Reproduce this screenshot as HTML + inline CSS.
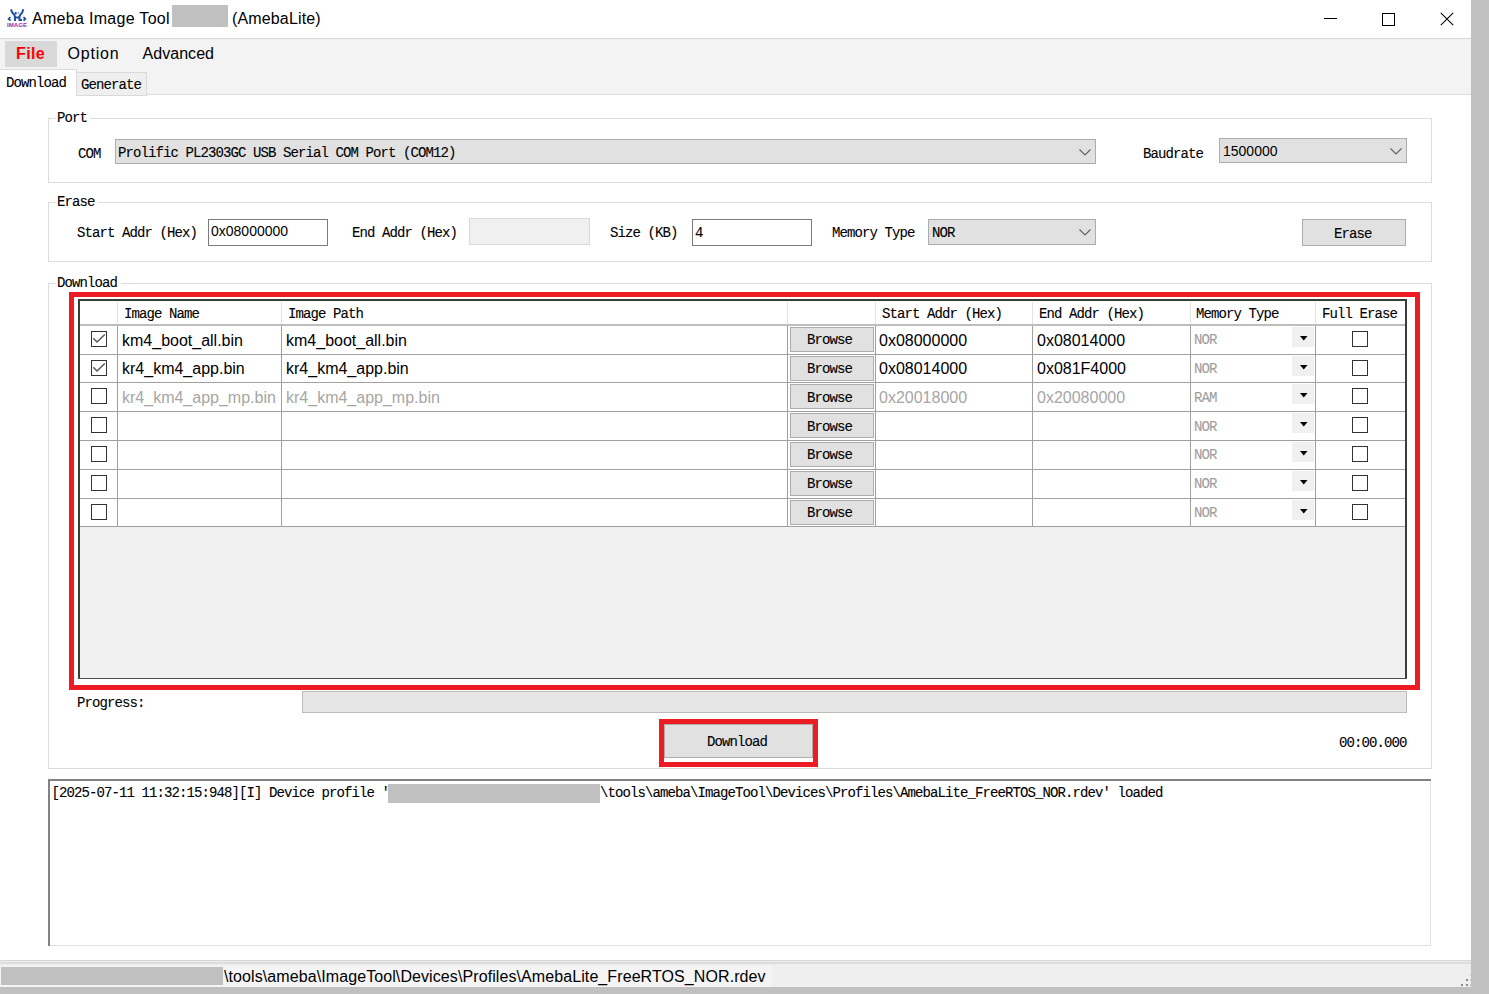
<!DOCTYPE html>
<html><head><meta charset="utf-8"><style>
*{margin:0;padding:0;box-sizing:border-box}
html,body{width:1489px;height:994px;overflow:hidden;background:#fff}
body{position:relative;font-family:"Liberation Sans",sans-serif;color:#000}
.a{position:absolute}
.ss{font-family:"Liberation Mono",monospace;font-size:14px;font-weight:normal;letter-spacing:-0.9px;white-space:pre;line-height:1;-webkit-text-stroke:0.1px currentColor}
.sa{font-family:"Liberation Sans",sans-serif;white-space:pre;line-height:1}
</style></head><body>
<svg class="a" style="left:0;top:0" width="32" height="32" viewBox="0 0 32 32"><g fill="none" stroke="#1f4fa3" stroke-width="2.0" stroke-linecap="square"><path d="M11.3 10.2 L12.3 12.6 L14.2 14.6 L15 17 L15 20"/><path d="M23 10.2 L22.2 12.6 L20.4 14.6 L19.5 16.5 L19.5 20 L21 20"/><path d="M15 17.5 L19 17.5"/></g><g fill="none" stroke="#1f4fa3" stroke-width="1.8"><path d="M10.5 17 L8.6 19 L10.5 20.6"/><path d="M23.5 17 L25.3 19 L23.5 20.6"/><path d="M15.7 12 L15.7 14.5"/></g><rect x="17.6" y="12.4" width="1.3" height="1.3" fill="#5a7fc0"/><text x="7" y="27" textLength="20" lengthAdjust="spacingAndGlyphs" font-family="Liberation Sans" font-size="5.8" font-weight="bold" fill="#9431a3">IMAGE</text></svg>
<div class="a sa" style="left:32px;top:11px;font-size:16px;color:#000;letter-spacing:0.3px">Ameba Image Tool</div>
<div class="a" style="left:172px;top:5px;width:56px;height:22px;background:#c0c0c0"></div>
<div class="a sa" style="left:232px;top:11px;font-size:16px;color:#000;letter-spacing:0.15px">(AmebaLite)</div>
<div class="a" style="left:1324px;top:18px;width:13px;height:1px;background:#000"></div>
<div class="a" style="left:1382px;top:13px;width:13px;height:13px;border:1px solid #000;"></div>
<svg class="a" style="left:1440px;top:12px" width="14" height="14" viewBox="0 0 14 14"><path d="M0.8 0.8 L13.2 13.2 M13.2 0.8 L0.8 13.2" stroke="#000" stroke-width="1.05"/></svg>
<div class="a" style="left:0px;top:38px;width:1471px;height:1px;background:#dadada"></div>
<div class="a" style="left:0px;top:39px;width:1471px;height:55px;background:#f3f3f3"></div>
<div class="a" style="left:5px;top:41px;width:52px;height:26px;background:#d9d9d9"></div>
<div class="a sa" style="left:16px;top:46px;font-size:16px;color:#ff0000;font-weight:bold;letter-spacing:0.4px">File</div>
<div class="a sa" style="left:67.5px;top:46px;font-size:16px;color:#000;letter-spacing:0.8px">Option</div>
<div class="a sa" style="left:142.5px;top:46px;font-size:16px;color:#000;letter-spacing:0.05px">Advanced</div>
<div class="a" style="left:76px;top:94px;width:1395px;height:1px;background:#dadada"></div>
<div class="a" style="left:0px;top:69px;width:77px;height:1px;background:#dadada"></div>
<div class="a" style="left:0px;top:70px;width:76px;height:26px;background:#ffffff"></div>
<div class="a" style="left:76px;top:69px;width:1px;height:26px;background:#dadada"></div>
<div class="a" style="left:76px;top:72px;width:71px;height:24px;border:1px solid #dadada;background:#efefef;"></div>
<div class="a ss" style="left:6px;top:76px;color:#000;">Download</div>
<div class="a ss" style="left:81px;top:78px;color:#000;">Generate</div>
<div class="a" style="left:48px;top:118px;width:1384px;height:65px;border:1px solid #dcdcdc;"></div>
<div class="a" style="left:56px;top:112px;width:34px;height:13px;background:#fff"></div>
<div class="a ss" style="left:57px;top:111px;color:#000;">Port</div>
<div class="a ss" style="left:78px;top:147px;color:#000;">COM</div>
<div class="a" style="left:115px;top:139px;width:981px;height:25px;border:1px solid #adadad;background:#e1e1e1;"></div>
<svg class="a" style="left:1079px;top:149px" width="12" height="7" viewBox="0 0 12 7"><path d="M0.5 0.5 L6 6 L11.5 0.5" fill="none" stroke="#606060" stroke-width="1.1"/></svg>
<div class="a ss" style="left:118px;top:146px;color:#000;">Prolific PL2303GC USB Serial COM Port (COM12)</div>
<div class="a ss" style="left:1143px;top:147px;color:#000;">Baudrate</div>
<div class="a" style="left:1219px;top:138px;width:188px;height:25px;border:1px solid #adadad;background:#e1e1e1;"></div>
<svg class="a" style="left:1390px;top:148px" width="12" height="7" viewBox="0 0 12 7"><path d="M0.5 0.5 L6 6 L11.5 0.5" fill="none" stroke="#606060" stroke-width="1.1"/></svg>
<div class="a sa" style="left:1223px;top:144px;font-size:14px;color:#000;">1500000</div>
<div class="a" style="left:48px;top:202px;width:1384px;height:60px;border:1px solid #dcdcdc;"></div>
<div class="a" style="left:56px;top:195px;width:42px;height:14px;background:#fff"></div>
<div class="a ss" style="left:57px;top:195px;color:#000;">Erase</div>
<div class="a ss" style="left:77px;top:226px;color:#000;">Start Addr (Hex)</div>
<div class="a" style="left:208px;top:219px;width:120px;height:27px;border:1px solid #7a7a7a;background:#fff;"></div>
<div class="a sa" style="left:211px;top:224px;font-size:14px;color:#000;">0x08000000</div>
<div class="a ss" style="left:352px;top:226px;color:#000;">End Addr (Hex)</div>
<div class="a" style="left:469px;top:218px;width:121px;height:27px;border:1px solid #d9d9d9;background:#f0f0f0;"></div>
<div class="a ss" style="left:610px;top:226px;color:#000;">Size (KB)</div>
<div class="a" style="left:692px;top:219px;width:120px;height:27px;border:1px solid #7a7a7a;background:#fff;"></div>
<div class="a ss" style="left:695px;top:226px;color:#000;">4</div>
<div class="a ss" style="left:832px;top:226px;color:#000;">Memory Type</div>
<div class="a" style="left:928px;top:219px;width:168px;height:26px;border:1px solid #adadad;background:#e1e1e1;"></div>
<svg class="a" style="left:1079px;top:229px" width="12" height="7" viewBox="0 0 12 7"><path d="M0.5 0.5 L6 6 L11.5 0.5" fill="none" stroke="#606060" stroke-width="1.1"/></svg>
<div class="a ss" style="left:932px;top:226px;color:#000;">NOR</div>
<div class="a" style="left:1302px;top:219px;width:104px;height:27px;border:1px solid #adadad;background:#e1e1e1;"></div>
<div class="a ss" style="left:1334px;top:227px;color:#000;">Erase</div>
<div class="a" style="left:48px;top:283px;width:1384px;height:486px;border:1px solid #dcdcdc;"></div>
<div class="a" style="left:56px;top:276px;width:65px;height:15px;background:#fff"></div>
<div class="a ss" style="left:57px;top:276px;color:#000;">Download</div>
<div class="a" style="left:69px;top:292px;width:1351px;height:398px;border:5px solid #ed1c24;"></div>
<div class="a" style="left:78px;top:299px;width:1329px;height:380px;background:#f0f0f0"></div>
<div class="a" style="left:80px;top:301px;width:1325px;height:24px;background:#ffffff"></div>
<div class="a" style="left:78px;top:299px;width:1329px;height:2px;background:#3c3c3c"></div>
<div class="a" style="left:78px;top:299px;width:2px;height:380px;background:#3c3c3c"></div>
<div class="a" style="left:1405px;top:299px;width:2px;height:380px;background:#3c3c3c"></div>
<div class="a" style="left:78px;top:678px;width:1329px;height:1px;background:#505050"></div>
<div class="a" style="left:117px;top:302px;width:1px;height:22px;background:#e3e3e3"></div>
<div class="a" style="left:281px;top:302px;width:1px;height:22px;background:#e3e3e3"></div>
<div class="a" style="left:787px;top:302px;width:1px;height:22px;background:#e3e3e3"></div>
<div class="a" style="left:875px;top:302px;width:1px;height:22px;background:#e3e3e3"></div>
<div class="a" style="left:1032px;top:302px;width:1px;height:22px;background:#e3e3e3"></div>
<div class="a" style="left:1190px;top:302px;width:1px;height:22px;background:#e3e3e3"></div>
<div class="a" style="left:1315px;top:302px;width:1px;height:22px;background:#e3e3e3"></div>
<div class="a" style="left:80px;top:324px;width:1325px;height:2px;background:#bdbdbd"></div>
<div class="a" style="left:80px;top:326px;width:1325px;height:200px;background:#ffffff"></div>
<div class="a" style="left:80px;top:354px;width:1325px;height:1px;background:#a0a0a0"></div>
<div class="a" style="left:80px;top:382px;width:1325px;height:1px;background:#a0a0a0"></div>
<div class="a" style="left:80px;top:411px;width:1325px;height:1px;background:#a0a0a0"></div>
<div class="a" style="left:80px;top:440px;width:1325px;height:1px;background:#a0a0a0"></div>
<div class="a" style="left:80px;top:469px;width:1325px;height:1px;background:#a0a0a0"></div>
<div class="a" style="left:80px;top:498px;width:1325px;height:1px;background:#a0a0a0"></div>
<div class="a" style="left:80px;top:526px;width:1325px;height:1px;background:#a0a0a0"></div>
<div class="a" style="left:117px;top:326px;width:1px;height:201px;background:#a0a0a0"></div>
<div class="a" style="left:281px;top:326px;width:1px;height:201px;background:#a0a0a0"></div>
<div class="a" style="left:787px;top:326px;width:1px;height:201px;background:#a0a0a0"></div>
<div class="a" style="left:875px;top:326px;width:1px;height:201px;background:#a0a0a0"></div>
<div class="a" style="left:1032px;top:326px;width:1px;height:201px;background:#a0a0a0"></div>
<div class="a" style="left:1190px;top:326px;width:1px;height:201px;background:#a0a0a0"></div>
<div class="a" style="left:1315px;top:326px;width:1px;height:201px;background:#a0a0a0"></div>
<div class="a ss" style="left:124px;top:307px;color:#000;">Image Name</div>
<div class="a ss" style="left:288px;top:307px;color:#000;">Image Path</div>
<div class="a ss" style="left:882px;top:307px;color:#000;">Start Addr (Hex)</div>
<div class="a ss" style="left:1039px;top:307px;color:#000;">End Addr (Hex)</div>
<div class="a ss" style="left:1196px;top:307px;color:#000;">Memory Type</div>
<div class="a ss" style="left:1322px;top:307px;color:#000;">Full Erase</div>
<div class="a" style="left:91px;top:331px;width:16px;height:16px;border:1px solid #333;"></div>
<svg class="a" style="left:91px;top:331px" width="16" height="16" viewBox="0 0 16 16"><path d="M2.3 7.2 L6 11 L13.8 3.6" fill="none" stroke="#555" stroke-width="1.4"/></svg>
<div class="a sa" style="left:122px;top:333px;font-size:16px;color:#000;">km4_boot_all.bin</div>
<div class="a sa" style="left:286px;top:333px;font-size:16px;color:#000;">km4_boot_all.bin</div>
<div class="a sa" style="left:879px;top:333px;font-size:16px;color:#000;">0x08000000</div>
<div class="a sa" style="left:1037px;top:333px;font-size:16px;color:#000;">0x08014000</div>
<div class="a" style="left:790px;top:327px;width:84px;height:25px;border:1px solid #adadad;background:#e1e1e1;"></div>
<div class="a ss" style="left:807px;top:333px;color:#000;">Browse</div>
<div class="a ss" style="left:1194px;top:333px;color:#a0a0a0;">NOR</div>
<div class="a" style="left:1292px;top:327px;width:22px;height:20px;background:#f0f0f0"></div>
<svg class="a" style="left:1300px;top:336px" width="8" height="5" viewBox="0 0 8 5"><path d="M0 0 H7.5 L3.75 4.5 Z" fill="#000"/></svg>
<div class="a" style="left:1352px;top:331px;width:16px;height:16px;border:1px solid #333;"></div>
<div class="a" style="left:91px;top:360px;width:16px;height:16px;border:1px solid #333;"></div>
<svg class="a" style="left:91px;top:360px" width="16" height="16" viewBox="0 0 16 16"><path d="M2.3 7.2 L6 11 L13.8 3.6" fill="none" stroke="#555" stroke-width="1.4"/></svg>
<div class="a sa" style="left:122px;top:361px;font-size:16px;color:#000;">kr4_km4_app.bin</div>
<div class="a sa" style="left:286px;top:361px;font-size:16px;color:#000;">kr4_km4_app.bin</div>
<div class="a sa" style="left:879px;top:361px;font-size:16px;color:#000;">0x08014000</div>
<div class="a sa" style="left:1037px;top:361px;font-size:16px;color:#000;">0x081F4000</div>
<div class="a" style="left:790px;top:356px;width:84px;height:25px;border:1px solid #adadad;background:#e1e1e1;"></div>
<div class="a ss" style="left:807px;top:362px;color:#000;">Browse</div>
<div class="a ss" style="left:1194px;top:362px;color:#a0a0a0;">NOR</div>
<div class="a" style="left:1292px;top:356px;width:22px;height:20px;background:#f0f0f0"></div>
<svg class="a" style="left:1300px;top:365px" width="8" height="5" viewBox="0 0 8 5"><path d="M0 0 H7.5 L3.75 4.5 Z" fill="#000"/></svg>
<div class="a" style="left:1352px;top:360px;width:16px;height:16px;border:1px solid #333;"></div>
<div class="a" style="left:91px;top:388px;width:16px;height:16px;border:1px solid #333;"></div>
<div class="a sa" style="left:122px;top:390px;font-size:16px;color:#a6a6a6;">kr4_km4_app_mp.bin</div>
<div class="a sa" style="left:286px;top:390px;font-size:16px;color:#a6a6a6;">kr4_km4_app_mp.bin</div>
<div class="a sa" style="left:879px;top:390px;font-size:16px;color:#a6a6a6;">0x20018000</div>
<div class="a sa" style="left:1037px;top:390px;font-size:16px;color:#a6a6a6;">0x20080000</div>
<div class="a" style="left:790px;top:384px;width:84px;height:25px;border:1px solid #adadad;background:#e1e1e1;"></div>
<div class="a ss" style="left:807px;top:391px;color:#000;">Browse</div>
<div class="a ss" style="left:1194px;top:391px;color:#a0a0a0;">RAM</div>
<div class="a" style="left:1292px;top:384px;width:22px;height:20px;background:#f0f0f0"></div>
<svg class="a" style="left:1300px;top:393px" width="8" height="5" viewBox="0 0 8 5"><path d="M0 0 H7.5 L3.75 4.5 Z" fill="#000"/></svg>
<div class="a" style="left:1352px;top:388px;width:16px;height:16px;border:1px solid #333;"></div>
<div class="a" style="left:91px;top:417px;width:16px;height:16px;border:1px solid #333;"></div>
<div class="a" style="left:790px;top:413px;width:84px;height:25px;border:1px solid #adadad;background:#e1e1e1;"></div>
<div class="a ss" style="left:807px;top:420px;color:#000;">Browse</div>
<div class="a ss" style="left:1194px;top:420px;color:#a0a0a0;">NOR</div>
<div class="a" style="left:1292px;top:413px;width:22px;height:20px;background:#f0f0f0"></div>
<svg class="a" style="left:1300px;top:422px" width="8" height="5" viewBox="0 0 8 5"><path d="M0 0 H7.5 L3.75 4.5 Z" fill="#000"/></svg>
<div class="a" style="left:1352px;top:417px;width:16px;height:16px;border:1px solid #333;"></div>
<div class="a" style="left:91px;top:446px;width:16px;height:16px;border:1px solid #333;"></div>
<div class="a" style="left:790px;top:442px;width:84px;height:25px;border:1px solid #adadad;background:#e1e1e1;"></div>
<div class="a ss" style="left:807px;top:448px;color:#000;">Browse</div>
<div class="a ss" style="left:1194px;top:448px;color:#a0a0a0;">NOR</div>
<div class="a" style="left:1292px;top:442px;width:22px;height:20px;background:#f0f0f0"></div>
<svg class="a" style="left:1300px;top:451px" width="8" height="5" viewBox="0 0 8 5"><path d="M0 0 H7.5 L3.75 4.5 Z" fill="#000"/></svg>
<div class="a" style="left:1352px;top:446px;width:16px;height:16px;border:1px solid #333;"></div>
<div class="a" style="left:91px;top:475px;width:16px;height:16px;border:1px solid #333;"></div>
<div class="a" style="left:790px;top:471px;width:84px;height:25px;border:1px solid #adadad;background:#e1e1e1;"></div>
<div class="a ss" style="left:807px;top:477px;color:#000;">Browse</div>
<div class="a ss" style="left:1194px;top:477px;color:#a0a0a0;">NOR</div>
<div class="a" style="left:1292px;top:471px;width:22px;height:20px;background:#f0f0f0"></div>
<svg class="a" style="left:1300px;top:480px" width="8" height="5" viewBox="0 0 8 5"><path d="M0 0 H7.5 L3.75 4.5 Z" fill="#000"/></svg>
<div class="a" style="left:1352px;top:475px;width:16px;height:16px;border:1px solid #333;"></div>
<div class="a" style="left:91px;top:504px;width:16px;height:16px;border:1px solid #333;"></div>
<div class="a" style="left:790px;top:500px;width:84px;height:25px;border:1px solid #adadad;background:#e1e1e1;"></div>
<div class="a ss" style="left:807px;top:506px;color:#000;">Browse</div>
<div class="a ss" style="left:1194px;top:506px;color:#a0a0a0;">NOR</div>
<div class="a" style="left:1292px;top:500px;width:22px;height:20px;background:#f0f0f0"></div>
<svg class="a" style="left:1300px;top:509px" width="8" height="5" viewBox="0 0 8 5"><path d="M0 0 H7.5 L3.75 4.5 Z" fill="#000"/></svg>
<div class="a" style="left:1352px;top:504px;width:16px;height:16px;border:1px solid #333;"></div>
<div class="a ss" style="left:77px;top:696px;color:#000;">Progress:</div>
<div class="a" style="left:302px;top:691px;width:1105px;height:22px;border:1px solid #bcbcbc;background:#e6e6e6;"></div>
<div class="a" style="left:659px;top:719px;width:159px;height:48px;border:5px solid #ed1c24;"></div>
<div class="a" style="left:664px;top:724px;width:149px;height:34px;border:1px solid #adadad;background:#e1e1e1;"></div>
<div class="a ss" style="left:707px;top:735px;color:#000;">Download</div>
<div class="a ss" style="left:1339px;top:736px;color:#000;">00:00.000</div>
<div class="a" style="left:48px;top:779px;width:1383px;height:167px;border:1px solid #e3e3e3;background:#fff;"></div>
<div class="a" style="left:48px;top:779px;width:1383px;height:2px;background:#828282"></div>
<div class="a" style="left:48px;top:779px;width:2px;height:167px;background:#828282"></div>
<div class="a ss" style="left:51.5px;top:786px;color:#000;">[2025-07-11 11:32:15:948][I] Device profile '</div>
<div class="a" style="left:388px;top:784px;width:212px;height:19px;background:#c0c0c0"></div>
<div class="a ss" style="left:600px;top:786px;color:#000;">\tools\ameba\ImageTool\Devices\Profiles\AmebaLite_FreeRTOS_NOR.rdev' loaded</div>
<div class="a" style="left:0px;top:960px;width:1471px;height:1px;background:#d8d8d8"></div>
<div class="a" style="left:0px;top:961px;width:1471px;height:1px;background:#ececec"></div>
<div class="a" style="left:0px;top:962px;width:1471px;height:2px;background:#dcdcdc"></div>
<div class="a" style="left:0px;top:964px;width:1471px;height:23px;background:#efefef"></div>
<div class="a" style="left:0px;top:966px;width:772px;height:21px;background:#f4f4f4"></div>
<div class="a" style="left:1px;top:967px;width:222px;height:18px;background:#c0c0c0"></div>
<div class="a sa" style="left:224px;top:969px;font-size:16px;color:#000;letter-spacing:0.09px">\tools\ameba\ImageTool\Devices\Profiles\AmebaLite_FreeRTOS_NOR.rdev</div>
<div class="a" style="left:1466px;top:979px;width:2px;height:2px;background:#8c8c8c"></div>
<div class="a" style="left:1461px;top:984px;width:2px;height:2px;background:#8c8c8c"></div>
<div class="a" style="left:1466px;top:984px;width:2px;height:2px;background:#8c8c8c"></div>
<div class="a" style="left:1470px;top:974px;width:1px;height:2px;background:#d0d0d0"></div>
<div class="a" style="left:1470px;top:979px;width:1px;height:2px;background:#d0d0d0"></div>
<div class="a" style="left:1470px;top:984px;width:1px;height:2px;background:#d0d0d0"></div>
<div class="a" style="left:1471px;top:0px;width:18px;height:994px;background:#c0c0c0"></div>
<div class="a" style="left:0px;top:987px;width:1489px;height:7px;background:#c0c0c0"></div>
</body></html>
